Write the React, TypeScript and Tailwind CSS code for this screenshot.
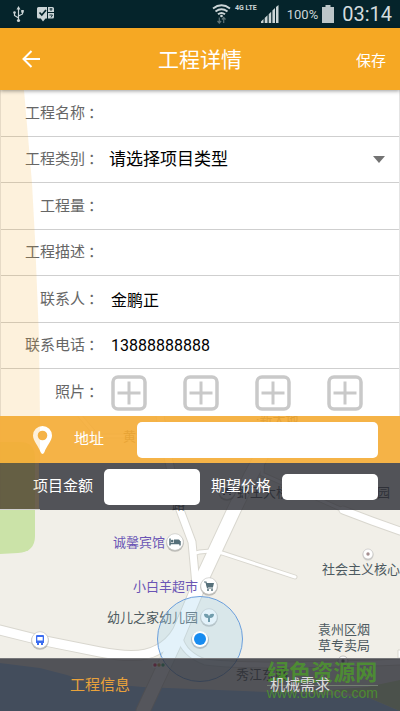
import { useState } from "react";
import type { ReactNode } from "react";

const mapLabels = [
  { text: "诚馨宾馆", x: 113, y: 547, color: "#6a55b5" },
  { text: "小白羊超市", x: 133, y: 591, color: "#6a55b5" },
  { text: "幼儿之家幼儿园", x: 107, y: 622, color: "#4d5a60" },
  { text: "社会主义核心", x: 322, y: 574, color: "#4d5a60" },
  { text: "袁州区烟", x: 318, y: 634, color: "#4d5a60" },
  { text: "草专卖局", x: 318, y: 650, color: "#4d5a60" },
  { text: "秀江东路", x: 236, y: 679, color: "#4a4f52" },
  { text: "黄", x: 123, y: 441, color: "#6b6040" },
  { text: "·新大地", x: 256, y: 424, color: "#4d4a40" },
  { text: "虾王大桥", x: 237, y: 497, color: "#40464c" },
  { text: "公园", x: 364, y: 497, color: "#40464c" },
  { text: "路", x: 172, y: 509, color: "#40464c" },
];

const roads = [
  { d: "M263 453L250 477L234 510L200 583L177 638L143 711", w: 13 },
  { d: "M160 416L167 453L180 510L192 542L196 585", w: 7 },
  { d: "M0 630L40 640L100 652Q140 660 157 650Q170 644 178 630L202 575", w: 9 },
  { d: "M343 510L372 521L400 531", w: 7 },
  { d: "M192 554Q205 549 222 553L295 577", w: 3 },
  { d: "M263 453L262 474L343 510", w: 3 },
  { d: "M80 416L97 436L137 436", w: 3 },
  { d: "M180 638Q184 654 205 662Q250 668 400 662", w: 5 },
];

function StatusBar() {
  return (
    <div className="flex h-7 items-center bg-[#05242b] pl-3 pr-2 text-[#cbd5d7]">
      <svg width="13" height="18" viewBox="0 0 13 18" fill="none" stroke="currentColor" strokeWidth="1.2">
        <path d="M6.5 3v12M6.5 13L2.5 10.5V8M6.5 11L10.5 9V6.5" />
        <path d="M6.5 1L8.5 4.500h-4z" fill="currentColor" stroke="none" />
        <circle cx="2.500" cy="7.500" r="1.300" fill="currentColor" stroke="none" />
        <path d="M9.200 5h2.600v2.600H9.200z" fill="currentColor" stroke="none" />
        <circle cx="6.500" cy="15.500" r="1.600" fill="currentColor" stroke="none" />
      </svg>
      <svg className="ml-3" width="18" height="16" viewBox="0 0 18 16">
        <path d="M1.500 1H10v11.500H8.500L6 15.500L3.800 12.500H1.500Q0 12.500 0 11V2.500Q0 1 1.500 1z" fill="currentColor" />
        <path d="M2.500 6.500L4.800 9L9 4" fill="none" stroke="#05242b" strokeWidth="1.700" />
        <path d="M11 1h4.500q1.500 0 1.500 1.500V6h-6zM11 7h6v4q0 1.500-1.500 1.500H11z" fill="currentColor" />
        <path d="M12.500 3h3M14 2v3M12.500 9h3L14 11.500" fill="none" stroke="#05242b" strokeWidth=".9" />
      </svg>
      <svg className="ml-auto" width="19" height="20" viewBox="0 0 19 20" fill="none" stroke="currentColor" strokeWidth="1.900">
        <path d="M1 4.500Q9.500-2 18 4.500M3.500 7.500Q9.500 3 15.500 7.500M6 10.300Q9.500 7.500 13 10.300" />
        <circle cx="9.500" cy="12" r="1.300" fill="currentColor" stroke="none" />
        <path d="M7.300 13.500V19M5.500 17l1.800 2l1.800-2M11.700 19v-5.500M9.900 15.500l1.800-2l1.800 2" stroke="#5d7276" strokeWidth="1.200" />
      </svg>
      <span className="mb-3 ml-1 text-[7px] font-bold leading-none">4G LTE</span>
      <svg className="ml-1" width="18" height="18" viewBox="0 0 18 18" fill="currentColor">
        <path d="M0 18v-1.500L2.500 14v4zM3.700 18v-5L6.500 10.300V18zM7.700 18V9.200L10.200 6.700V18zM11.400 18V5.500L14 3V18zM15 18V2L17.500 0V18z" />
      </svg>
      <span className="ml-2 text-[13px] leading-none">100%</span>
      <svg className="ml-1" width="12" height="18" viewBox="0 0 12 18" fill="#bcc6c8">
        <path d="M3.500 0h5v2H12v16H0V2h3.500z" />
      </svg>
      <span className="ml-2 text-[20px] leading-none text-[#d3dcde]">03:14</span>
    </div>
  );
}

function Row({ label, id, children }: { label: string; id?: string; children?: ReactNode }) {
  const text = (
    <>
      {label}
      <span className="pl-[3px]">：</span>
    </>
  );
  return (
    <div className="flex items-center">
      {id ? (
        <label htmlFor={id} className="w-[102px] shrink-0 text-right text-[15px] text-[#666]">{text}</label>
      ) : (
        <span className="w-[102px] shrink-0 text-right text-[15px] text-[#666]">{text}</span>
      )}
      {children}
    </div>
  );
}

function TextRow({ label, id, initial = "" }: { label: string; id: string; initial?: string }) {
  const [value, setValue] = useState(initial);
  return (
    <Row label={label} id={id}>
      <input
        id={id}
        value={value}
        onChange={(e) => setValue(e.target.value)}
        className="ml-2 h-9 min-w-0 flex-1 bg-transparent text-[16px] text-black outline-none"
      />
    </Row>
  );
}

function Poi({ x, y, children }: { x: number; y: number; children: ReactNode }) {
  return (
    <g transform={`translate(${x} ${y})`}>
      <circle cy="1" r="8.800" fill="#9a9a96" opacity=".6" />
      <circle r="8.300" fill="#fff" stroke="#c0c0bc" strokeWidth=".6" />
      {children}
    </g>
  );
}

function MapView() {
  return (
    <svg
      className="absolute inset-0 h-full w-full"
      viewBox="0 416 400 295"
      preserveAspectRatio="xMidYMin slice"
    >
      <rect y="416" width="400" height="295" fill="#f1efe8" />
      <path d="M0 442H20Q35 442 35 458V536Q35 552 18 553L0 554z" fill="#cbe3a8" />
      <path d="M0 663L40 668L67 675L87 682L143 687L267 692L367 697L400 711H0z" fill="#a5d0ff" />
      <path d="M330 690L367 687L400 680V711L367 697z" fill="#cbe3a8" />
      {roads.map((r) => (
        <path key={r.d} d={r.d} fill="none" stroke="#d9d7cf" strokeWidth={r.w + 2} strokeLinecap="round" />
      ))}
      {roads.map((r) => (
        <path key={r.d} d={r.d} fill="none" stroke="#fff" strokeWidth={r.w} strokeLinecap="round" />
      ))}
      <path d="M398 650h4v8h-4z" fill="#fff" stroke="#d9d7cf" />

      {mapLabels.map((l) => (
        <text key={l.text} x={l.x} y={l.y} fontSize="13" fill={l.color}>
          {l.text}
        </text>
      ))}

      <Poi x={175} y={542}>
        <path d="M-5-3.500v7M-5 1.500H5M5-1v4.500" fill="none" stroke="#56707a" strokeWidth="1.500" />
        <path d="M-1-2.500h4.500Q5-2.500 5-1v2H-1z" fill="#56707a" />
        <circle cx="-2.800" cy="-1" r="1.300" fill="#56707a" />
      </Poi>
      <Poi x={209} y={586}>
        <path d="M-5-4h2L-1.500 2H4" fill="none" stroke="#56707a" strokeWidth="1.200" />
        <path d="M-3-3H5L4 1H-2z" fill="#56707a" />
        <circle cx="-1" cy="4" r="1" fill="#56707a" />
        <circle cx="3" cy="4" r="1" fill="#56707a" />
      </Poi>
      <Poi x={209} y={617}>
        <path d="M-1 5V1Q-5 1-5-3Q-1-4 0-1Q1-4 5-3Q5 1 1 1V5z" fill="#56808c" />
      </Poi>
      <Poi x={40} y={640}>
        <path d="M-3-5H3Q4-5 4-4V3H-4V-4Q-4-5-3-5zM-3 3h2v2h-2zM1 3h2v2H1z" fill="#3c6df0" />
        <path d="M-2.700-3H2.700V.5H-2.700z" fill="#fff" />
      </Poi>
      <Poi x={227} y={491}>
        <path d="M-4-3h8v5h-8zM-4 3h2v1h-2zM2 3h2v1H2z" fill="#3c4d6a" />
      </Poi>
      <circle cx="368" cy="555" r="5.500" fill="#aaa" opacity=".5" />
      <circle cx="368" cy="554" r="5" fill="#fff" stroke="#bbb" strokeWidth=".6" />
      <circle cx="368" cy="554" r="1.700" fill="#a58f90" />
      <circle cx="343" cy="661" r="5" fill="#fff" stroke="#999" strokeWidth=".6" />
      <circle cx="343" cy="661" r="1.700" fill="#666" />
      <rect x="152" y="662" width="13" height="6" rx="2" fill="#fff" />
      <circle cx="155" cy="665" r="1.700" fill="#f0205a" />
      <circle cx="159" cy="665" r="1.700" fill="#c0a040" />
      <circle cx="163" cy="665" r="1.700" fill="#30b070" />

      <circle cx="200" cy="639" r="42.500" fill="#a9d8ef" fillOpacity=".33" stroke="#6b9fdc" />
      <circle cx="200" cy="640" r="9" fill="#8a9aa8" opacity=".5" />
      <circle cx="200" cy="639" r="8" fill="#fff" />
      <circle cx="200" cy="639" r="6" fill="#188cf0" />
    </svg>
  );
}

export default function App() {
  const [type, setType] = useState("");
  const [activeTab, setActiveTab] = useState("info");

  return (
    <div className="flex min-h-screen flex-col bg-white font-[Roboto,'Noto_Sans_CJK_SC',sans-serif]">
      <StatusBar />
      <header className="relative z-20 grid h-[62px] grid-cols-3 items-center bg-[#f6a823] px-[14px] text-white shadow-[0_1px_4px_rgba(0,0,0,0.4)]">
        <button aria-label="返回" className="justify-self-start p-2">
          <svg width="18" height="18" viewBox="0 0 18 18" fill="none" stroke="currentColor" strokeWidth="2">
            <path d="M9.500 1L1.500 9L9.500 17M1.500 9H18" />
          </svg>
        </button>
        <h1 className="justify-self-center whitespace-nowrap pt-1 text-[21px]">工程详情</h1>
        <button className="justify-self-end pt-1 text-[15px]">保存</button>
      </header>

      <form className="relative grid min-h-[326px] auto-rows-fr divide-y divide-[#cfcfcf] border-x border-[#e4e4e4]">
        {/* map tint that runs down the left side, over the form and both price bars */}
        <svg className="pointer-events-none absolute -left-px top-0 z-10" width="40" height="420" viewBox="0 0 40 420">
          <path d="M0 0H24L28 46L32 93L35 148L37 197L39 247L40 326V373H39V420H0z" fill="#f5a623" fillOpacity=".16" />
        </svg>
        <TextRow label="工程名称" id="name" />
        <Row label="工程类别" id="type">
          <div className="relative ml-[6px] mr-[14px] flex flex-1 items-center">
            <select
              id="type"
              value={type}
              onChange={(e) => setType(e.target.value)}
              className="h-9 w-full appearance-none bg-transparent text-[17px] text-black outline-none"
            >
              <option value="">请选择项目类型</option>
            </select>
            <svg className="pointer-events-none absolute right-0" width="12" height="7" viewBox="0 0 12 7">
              <path d="M0 0h12L6 7z" fill="#737373" />
            </svg>
          </div>
        </Row>
        <TextRow label="工程量" id="amount" />
        <TextRow label="工程描述" id="desc" />
        <TextRow label="联系人" id="contact" initial="金鹏正" />
        <TextRow label="联系电话" id="phone" initial="13888888888" />
        <Row label="照片">
          <div className="ml-2 mr-9 flex flex-1 justify-between">
            {[1, 2, 3, 4].map((n) => (
              <button key={n} type="button" aria-label={`添加照片 ${n}`}>
                <svg width="36" height="36" viewBox="0 0 36 36" fill="none" stroke="#c9c9c9" strokeWidth="3.500">
                  <rect x="2" y="2" width="32" height="32" rx="5" />
                  <path d="M18 6.500v23M6.500 18h23" strokeWidth="3" />
                </svg>
              </button>
            ))}
          </div>
        </Row>
      </form>

      <section className="relative flex flex-1 flex-col">
        <MapView />
        <div className="relative flex h-[47px] items-center bg-[#f5ac35]/90 pl-[33px] pr-[22px]">
          <svg width="19" height="28" viewBox="0 0 19 28">
            <path
              d="M9.500 0A9.500 9.500 0 0 1 19 9.500C19 15 13.500 20 11.500 26Q9.500 30 7.500 26C5.500 20 0 15 0 9.500A9.500 9.500 0 0 1 9.500 0zM9.500 4.700A4.800 4.800 0 1 0 9.500 14.300A4.800 4.800 0 1 0 9.500 4.700z"
              fill="#fff"
            />
          </svg>
          <label htmlFor="address" className="ml-[22px] text-[15px] text-white">地址</label>
          <input id="address" className="ml-[33px] h-9 min-w-0 flex-1 rounded-[5px] bg-white px-2 outline-none" />
        </div>
        <div className="relative flex h-[47px] items-center bg-[#2a2c33]/80 pl-[33px] pr-[22px] text-[15px] text-white">
          <label htmlFor="total" className="shrink-0">项目金额</label>
          <input id="total" className="ml-[11px] h-9 min-w-0 flex-1 rounded-[5px] bg-white px-2 text-black outline-none" />
          <label htmlFor="expect" className="ml-[11px] shrink-0">期望价格</label>
          <input id="expect" className="ml-[11px] h-[26px] min-w-0 flex-1 rounded-[5px] bg-white px-2 text-black outline-none" />
        </div>

        <nav className="relative mt-auto grid h-[53px] grid-cols-2 border-t border-[#77777a] bg-[#2a2c33]/80 text-[15px]">
          <div className="pointer-events-none absolute right-[22px] top-[2px] flex flex-col items-center text-[#4d9a2c] opacity-80">
            <span className="text-[22px] font-bold leading-6">绿色资源网</span>
            <span className="border-t border-[#7c8a78] font-['Liberation_Sans'] text-[14px] leading-[14px]">www.downcc.com</span>
          </div>
          <button
            onClick={() => setActiveTab("info")}
            className={`relative ${activeTab === "info" ? "text-[#e9a23b]" : "text-[#dcdcdc]"}`}
          >
            工程信息
          </button>
          <button
            onClick={() => setActiveTab("machine")}
            className={`relative ${activeTab === "machine" ? "text-[#e9a23b]" : "text-[#dcdcdc]"}`}
          >
            机械需求
          </button>
        </nav>
      </section>
    </div>
  );
}
